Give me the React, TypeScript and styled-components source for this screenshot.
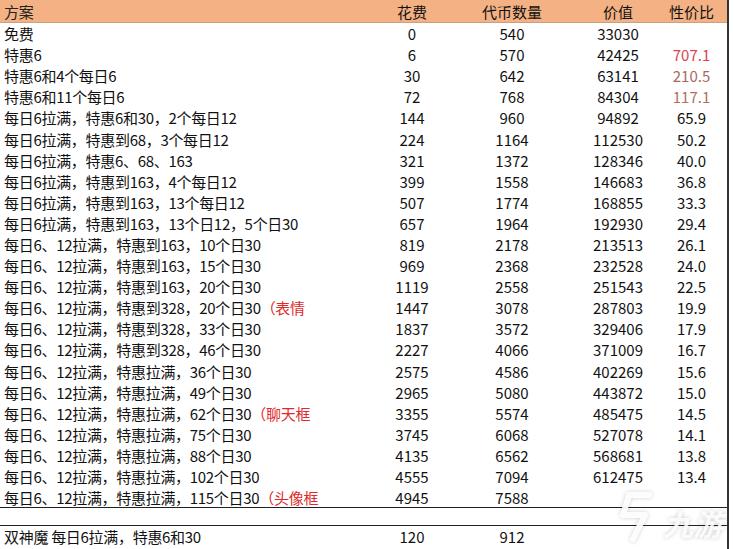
import React from 'react';
import styled, { createGlobalStyle } from 'styled-components';

const Global = createGlobalStyle`
  body { margin: 0; background: #fff; font-family: "Noto Sans CJK SC", "Noto Sans", sans-serif; }
`;

const Sheet = styled.div`
  position: relative;
  width: 727px;
  height: 549px;
  border-right: 2px solid #333;
  overflow: hidden;
`;

const cols = '380px 64px 136px 76px 71px';

const Head = styled.div`
  display: grid;
  grid-template-columns: ${cols};
  height: 22px;
  align-items: center;
  background: #f4b183;
  font-size: 15px;
  color: #222;
  border-bottom: 1px solid #c9a080;
`;

const Row = styled.div<{ $line?: boolean }>`
  display: grid;
  grid-template-columns: ${cols};
  height: 21.1px;
  align-items: center;
  font-size: 15px;
  color: #111;
  border-bottom: ${(p) => (p.$line ? '1px solid #222' : 'none')};
  box-sizing: border-box;
`;

const Name = styled.div`
  padding-left: 4px;
  white-space: nowrap;
  letter-spacing: -0.3px;
`;

const Num = styled.div<{ $color?: string }>`
  text-align: center;
  color: ${(p) => p.$color || '#111'};
`;

const Note = styled.span`
  color: #e02a2a;
`;

const Gap = styled.div`
  height: 17px;
  border-bottom: 1px solid #222;
`;

const Mark = styled.div`
  position: absolute;
  right: 4px;
  bottom: 4px;
  display: flex;
  align-items: flex-end;
  gap: 4px;
  color: rgba(255,255,255,0.9);
  font-size: 30px;
  font-weight: 700;
  font-style: italic;
  text-shadow: 0 0 4px rgba(0,0,0,0.2);
`;

const rows: [string, string | null, string, string, string, string, string?][] = [
  ['免费', null, '0', '540', '33030', ''],
  ['特惠6', null, '6', '570', '42425', '707.1', '#e0404f'],
  ['特惠6和4个每日6', null, '30', '642', '63141', '210.5', '#a8685e'],
  ['特惠6和11个每日6', null, '72', '768', '84304', '117.1', '#b0705e'],
  ['每日6拉满，特惠6和30，2个每日12', null, '144', '960', '94892', '65.9'],
  ['每日6拉满，特惠到68，3个每日12', null, '224', '1164', '112530', '50.2'],
  ['每日6拉满，特惠6、68、163', null, '321', '1372', '128346', '40.0'],
  ['每日6拉满，特惠到163，4个每日12', null, '399', '1558', '146683', '36.8'],
  ['每日6拉满，特惠到163，13个每日12', null, '507', '1774', '168855', '33.3'],
  ['每日6拉满，特惠到163，13个日12，5个日30', null, '657', '1964', '192930', '29.4'],
  ['每日6、12拉满，特惠到163，10个日30', null, '819', '2178', '213513', '26.1'],
  ['每日6、12拉满，特惠到163，15个日30', null, '969', '2368', '232528', '24.0'],
  ['每日6、12拉满，特惠到163，20个日30', null, '1119', '2558', '251543', '22.5'],
  ['每日6、12拉满，特惠到328，20个日30', '（表情', '1447', '3078', '287803', '19.9'],
  ['每日6、12拉满，特惠到328，33个日30', null, '1837', '3572', '329406', '17.9'],
  ['每日6、12拉满，特惠到328，46个日30', null, '2227', '4066', '371009', '16.7'],
  ['每日6、12拉满，特惠拉满，36个日30', null, '2575', '4586', '402269', '15.6'],
  ['每日6、12拉满，特惠拉满，49个日30', null, '2965', '5080', '443872', '15.0'],
  ['每日6、12拉满，特惠拉满，62个日30', '（聊天框', '3355', '5574', '485475', '14.5'],
  ['每日6、12拉满，特惠拉满，75个日30', null, '3745', '6068', '527078', '14.1'],
  ['每日6、12拉满，特惠拉满，88个日30', null, '4135', '6562', '568681', '13.8'],
  ['每日6、12拉满，特惠拉满，102个日30', null, '4555', '7094', '612475', '13.4'],
  ['每日6、12拉满，特惠拉满，115个日30', '（头像框', '4945', '7588', '', ''],
];

export default function App() {
  return (
    <Sheet>
      <Global />
      <Head>
        <Name>方案</Name>
        <Num>花费</Num>
        <Num>代币数量</Num>
        <Num>价值</Num>
        <Num>性价比</Num>
      </Head>
      {rows.map((r, i) => (
        <Row key={i} $line={i === rows.length - 1}>
          <Name>
            {r[0]}
            {r[1] && <Note>{r[1]}</Note>}
          </Name>
          <Num>{r[2]}</Num>
          <Num>{r[3]}</Num>
          <Num>{r[4]}</Num>
          <Num $color={r[6]}>{r[5]}</Num>
        </Row>
      ))}
      <Gap />
      <Row>
        <Name>双神魔 每日6拉满，特惠6和30</Name>
        <Num>120</Num>
        <Num>912</Num>
        <Num></Num>
        <Num></Num>
      </Row>
      <Mark>
        <svg width="44" height="56" viewBox="0 0 44 56" fill="none" stroke="rgba(255,255,255,0.92)" strokeWidth="6" strokeLinecap="round" strokeLinejoin="round" style={{ filter: 'drop-shadow(0 0 2px rgba(0,0,0,0.2))' }}>
          <path d="M34 6 L14 6 L8 26 L30 26 L18 50" />
        </svg>
        <span>九游</span>
      </Mark>
    </Sheet>
  );
}
